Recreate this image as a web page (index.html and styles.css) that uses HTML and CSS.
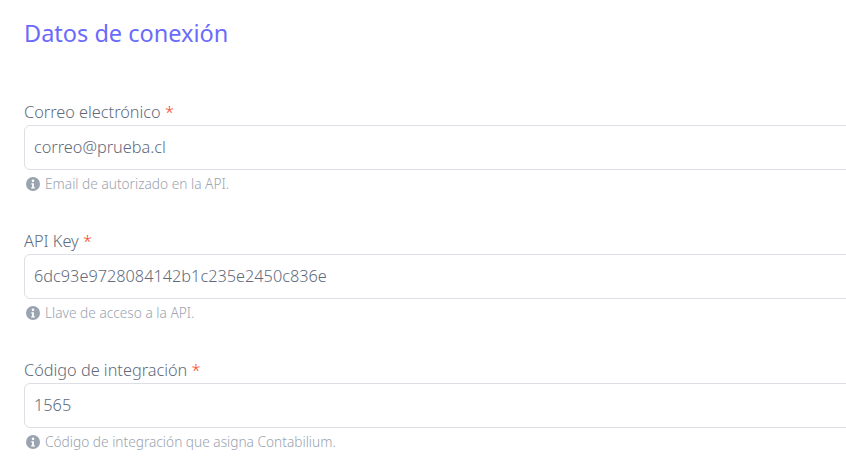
FILE: index.html
```html
<!DOCTYPE html>
<html lang="es">
<head>
<meta charset="utf-8">
<title>Datos de conexión</title>
<link rel="stylesheet" href="styles.css">
</head>
<body>
<main class="panel">
  <h2 class="title">Datos de conexión</h2>
  <div class="fields">
    <div class="field">
      <label class="label">Correo electrónico <span class="req">*</span></label>
      <input class="input" type="text" value="correo@prueba.cl">
      <p class="hint"><svg class="info" viewBox="0 0 16 16"><circle cx="8" cy="8" r="8" fill="currentColor"/><circle cx="8" cy="4.4" r="1.5" fill="#fff"/><path d="M6 7h3v4.6h1.1v1.5H5.9v-1.5h1.1V8.5h-1z" fill="#fff"/></svg>Email de autorizado en la API.</p>
    </div>
    <div class="field">
      <label class="label">API Key <span class="req">*</span></label>
      <input class="input" type="text" value="6dc93e9728084142b1c235e2450c836e">
      <p class="hint"><svg class="info" viewBox="0 0 16 16"><circle cx="8" cy="8" r="8" fill="currentColor"/><circle cx="8" cy="4.4" r="1.5" fill="#fff"/><path d="M6 7h3v4.6h1.1v1.5H5.9v-1.5h1.1V8.5h-1z" fill="#fff"/></svg>Llave de acceso a la API.</p>
    </div>
    <div class="field">
      <label class="label">Código de integración <span class="req">*</span></label>
      <input class="input" type="text" value="1565">
      <p class="hint"><svg class="info" viewBox="0 0 16 16"><circle cx="8" cy="8" r="8" fill="currentColor"/><circle cx="8" cy="4.4" r="1.5" fill="#fff"/><path d="M6 7h3v4.6h1.1v1.5H5.9v-1.5h1.1V8.5h-1z" fill="#fff"/></svg>Código de integración que asigna Contabilium.</p>
    </div>
  </div>
</main>
</body>
</html>
```
FILE: styles.css
```css
html, body {
  margin: 0;
  height: 100%;
  overflow: hidden;
  background: #fff;
}
body {
  font-family: "Noto Sans", sans-serif;
  color: #6b7280;
}
.panel {
  width: 860px;
  padding: 17px 0 0 24px;
  box-sizing: border-box;
}
.title {
  margin: 0 0 50px;
  font-size: 23.5px;
  line-height: 32px;
  font-weight: 400;
  color: #6b6bfb;
}
.fields {
  display: flex;
  flex-direction: column;
  gap: 35px;
}
.label {
  display: block;
  padding-top: 1px;
  margin-bottom: 1px;
  font-size: 16.3px;
  line-height: 24px;
  font-weight: 300;
  color: #5f6b7c;
}
.req {
  color: #f4451f;
}
.input {
  display: block;
  width: 100%;
  height: 45px;
  box-sizing: border-box;
  padding: 0 9px 2px;
  border: 1px solid #dcdfe4;
  border-radius: 6px;
  background: #fff;
  font: 300 16.3px "Noto Sans", sans-serif;
  color: #5f6b7c;
  outline: none;
}
.hint {
  display: flex;
  align-items: center;
  gap: 5px;
  margin: 5px 0 0;
  padding-left: 2px;
  font-size: 13.7px;
  line-height: 18px;
  font-weight: 300;
  color: #9aa3b0;
}
.info {
  width: 14px;
  height: 14px;
  flex: none;
}
```
